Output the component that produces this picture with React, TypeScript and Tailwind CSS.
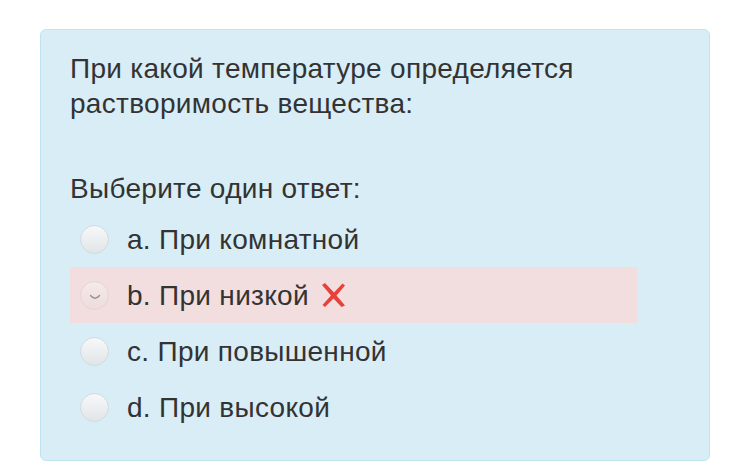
const options = [
  { label: 'a.', text: 'При комнатной' },
  { label: 'b.', text: 'При низкой', wrong: true },
  { label: 'c.', text: 'При повышенной' },
  { label: 'd.', text: 'При высокой' },
]

const Radio = ({ checked }: { checked?: boolean }) => {
  if (checked) {
    return (
      <span className="flex h-[29px] w-[29px] shrink-0 items-center justify-center rounded-full border border-[#e6d3d3] bg-gradient-to-b from-[#f6eaea] to-[#eddcdc]">
        <svg width="12" height="8" viewBox="0 0 12 8" className="mt-[3px]">
          <path d="M1.5 2.5 Q6 8 10.5 2.5" fill="none" stroke="#9a8f90" strokeWidth="1.4" strokeLinecap="round" />
        </svg>
      </span>
    )
  }
  return (
    <span className="block h-[29px] w-[29px] shrink-0 rounded-full border border-[#d0dae0] bg-gradient-to-b from-[#f7f8f9] to-[#e1e5e8]" />
  )
}

const WrongMark = () => (
  <svg width="25" height="26" viewBox="0 0 25 26" className="ml-[12px]">
    <path d="M1 3 L4 1 L13 10.5 L21.5 1.5 L24 3.5 L15.5 13.5 L24 23.5 L20.5 25 L12.5 16.5 L4 25 L1.5 23 L10 13.5 Z" fill="#e8403a" />
  </svg>
)

const App = () => {
  return (
    <div className="h-[468px] w-[750px] bg-white pl-[40px] pt-[29px] font-['Liberation_Sans',Arial,sans-serif] text-[28px] leading-[35px] tracking-[0.3px] text-[#333333]">
      <div className="h-[432px] w-[670px] rounded-[6px] border border-[#bfe3ef] bg-[#d9edf7] px-[29px] pt-[21px]">
        <div>
          При какой температуре определяется
          <br />
          растворимость вещества:
        </div>
        <div className="mt-[50px]">Выберите один ответ:</div>
        <div className="mt-[5px] w-[567px]">
          {options.map((o) => (
            <div
              key={o.label}
              className={
                'flex h-[56px] items-center pl-[10px] ' + (o.wrong ? 'bg-[#f2dede]' : '')
              }
            >
              <Radio checked={o.wrong} />
              <span className="ml-[18px]">
                {o.label} {o.text}
              </span>
              {o.wrong && <WrongMark />}
            </div>
          ))}
        </div>
      </div>
    </div>
  )
}

export default App
